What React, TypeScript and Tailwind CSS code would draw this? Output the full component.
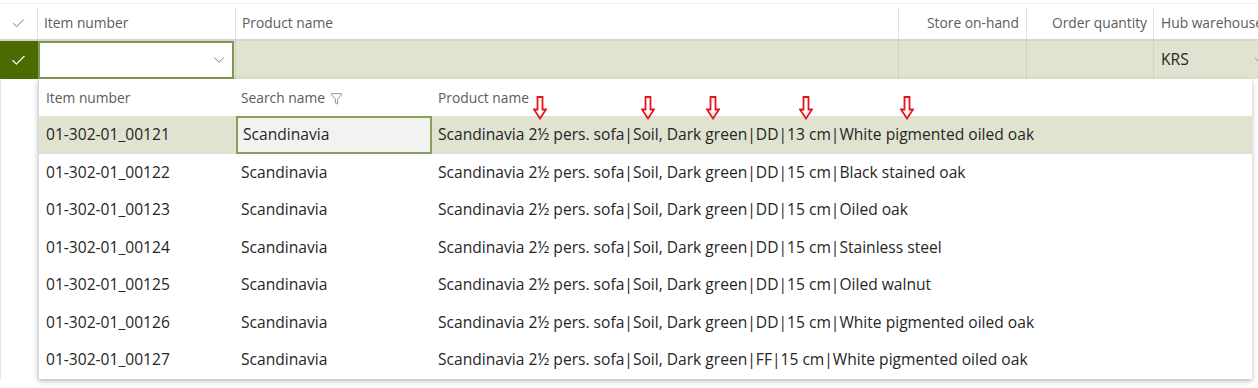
import { Check, ChevronDown, Funnel } from "lucide-react";

const rows = [
  { id: "01-302-01_00121", product: "Scandinavia 2½ pers. sofa|Soil, Dark green|DD|13 cm|White pigmented oiled oak" },
  { id: "01-302-01_00122", product: "Scandinavia 2½ pers. sofa|Soil, Dark green|DD|15 cm|Black stained oak" },
  { id: "01-302-01_00123", product: "Scandinavia 2½ pers. sofa|Soil, Dark green|DD|15 cm|Oiled oak" },
  { id: "01-302-01_00124", product: "Scandinavia 2½ pers. sofa|Soil, Dark green|DD|15 cm|Stainless steel" },
  { id: "01-302-01_00125", product: "Scandinavia 2½ pers. sofa|Soil, Dark green|DD|15 cm|Oiled walnut" },
  { id: "01-302-01_00126", product: "Scandinavia 2½ pers. sofa|Soil, Dark green|DD|15 cm|White pigmented oiled oak" },
  { id: "01-302-01_00127", product: "Scandinavia 2½ pers. sofa|Soil, Dark green|FF|15 cm|White pigmented oiled oak" },
];

// x positions of the red annotation arrows
const arrows = [540, 648, 713, 806, 907];

const RedArrow = ({ left }: { left: number }) => (
  <svg
    className="absolute top-[96px]"
    style={{ left: left - 7 }}
    width="14"
    height="24"
    viewBox="0 0 14 24"
  >
    <path
      d="M4.5 1 H9.5 V13.5 H13 L7 22.5 L1 13.5 H4.5 Z"
      fill="white"
      stroke="#e8141b"
      strokeWidth="1.8"
      strokeLinejoin="miter"
    />
  </svg>
);

export default function App() {
  return (
    <div
      className="relative w-[1258px] h-[388px] overflow-hidden bg-white text-[#262626]"
      style={{ fontFamily: '"Open Sans", "Noto Sans", sans-serif' }}
    >
      {/* Grid header */}
      <div className="mt-[3px] border-t border-[#f0f0f0] flex h-[38px] pt-[4px] border-b-2 border-b-[#d4d4d4] text-[13.8px] text-[#5c5c5c]">
        <div className="w-[38px] shrink-0 border-r border-[#e1e1e1] flex items-center justify-center">
          <Check size={15} strokeWidth={1.3} className="text-[#555]" />
        </div>
        <div className="w-[198px] shrink-0 border-r border-[#e1e1e1] flex items-center pl-[6px]">Item number</div>
        <div className="w-[663px] shrink-0 border-r border-[#e1e1e1] flex items-center pl-[6px]">Product name</div>
        <div className="w-[128px] shrink-0 border-r border-[#e1e1e1] flex items-center justify-end pr-[7px]">Store on-hand</div>
        <div className="w-[127px] shrink-0 border-r border-[#e1e1e1] flex items-center justify-end pr-[6px]">Order quantity</div>
        <div className="flex-1 flex items-center pl-[7px] whitespace-nowrap">Hub warehouse</div>
      </div>

      {/* Selected grid row */}
      <div className="flex h-[38px] bg-[#dfe3d0] text-[15.6px]">
        <div className="w-[38px] shrink-0 bg-[#4a6a02] flex items-center justify-center border-r border-[#4a6a02]">
          <Check size={17} strokeWidth={1.6} className="text-white" />
        </div>
        <div className="w-[198px] shrink-0 border-r border-[#cfd4bf] pr-[1px]">
          <div className="h-full bg-white border-2 border-[#7e9a51] flex items-center justify-end pr-[4px]">
            <ChevronDown size={18} strokeWidth={1.2} className="text-[#6b6b6b]" />
          </div>
        </div>
        <div className="w-[663px] shrink-0 border-r border-[#cfd4bf]" />
        <div className="w-[128px] shrink-0 border-r border-[#cfd4bf]" />
        <div className="w-[127px] shrink-0 border-r border-[#cfd4bf]" />
        <div className="flex-1 flex items-center justify-between pl-[7px] pr-0">
          <span>KRS</span>
          <ChevronDown size={14} strokeWidth={1.2} className="text-[#6b6b6b] -mr-[8px]" />
        </div>
      </div>

      {/* Lookup dropdown */}
      <div className="flex">
        <div className="w-[38px] shrink-0 border-l border-[#e8e8e8]" />
        <div className="w-[1214px] shrink-0 bg-white border-l border-[#d8d8d8] shadow-[0_2px_5px_rgba(0,0,0,0.28)] text-[15.6px]">
          <div className="flex h-[37px] items-center pt-[1px] text-[13.8px] text-[#5c5c5c]">
            <div className="w-[197px] shrink-0 pl-[7px]">Item number</div>
            <div className="w-[196px] shrink-0 pl-[5px] flex items-center gap-[5px]">
              Search name
              <Funnel size={13} strokeWidth={1.2} className="text-[#555]" />
            </div>
            <div className="flex-1 pl-[6px]">Product name</div>
          </div>
          {rows.map((r, i) => (
            <div
              key={r.id}
              className={`flex h-[37.5px] items-center whitespace-nowrap ${i === 0 ? "bg-[#dfe3d0]" : ""}`}
            >
              <div className="w-[197px] shrink-0 pl-[7px]">{r.id}</div>
              <div className="w-[196px] shrink-0 h-full">
                <div
                  className={`h-full flex items-center pl-[5px] ${
                    i === 0 ? "bg-[#f2f2f2] border-2 border-[#86a05c] pl-[3px]" : ""
                  }`}
                >
                  Scandinavia
                </div>
              </div>
              <div className="flex-1 pl-[6px]">{r.product}</div>
            </div>
          ))}
        </div>
      </div>

      {arrows.map((x) => (
        <RedArrow key={x} left={x} />
      ))}
    </div>
  );
}
